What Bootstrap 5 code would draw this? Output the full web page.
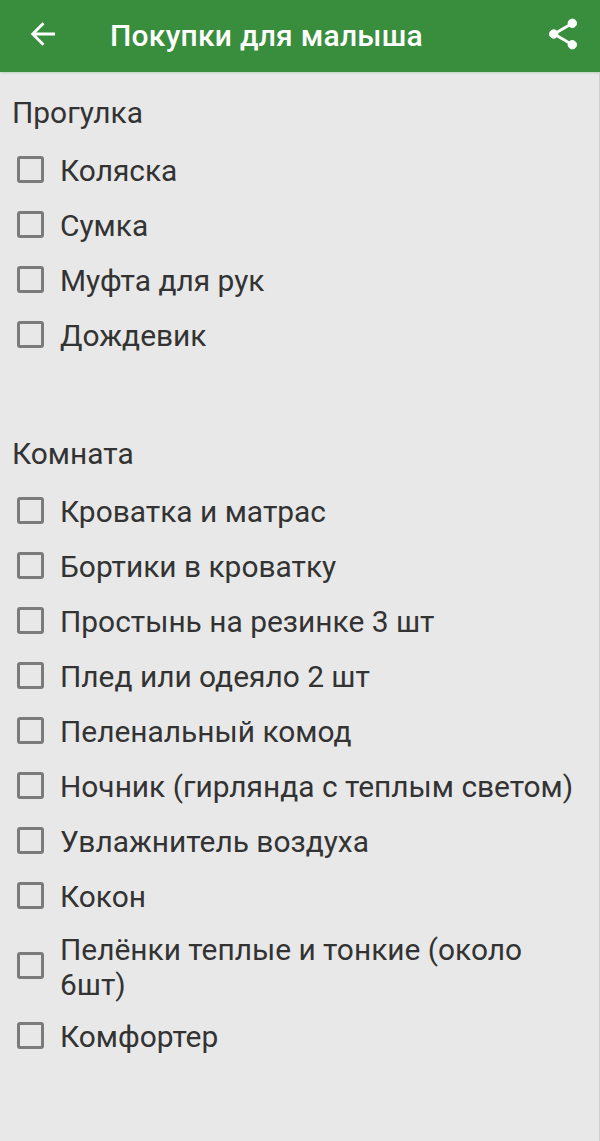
<!DOCTYPE html>
<html lang="ru">

<head>
  <meta charset="UTF-8" />
  <meta name="viewport" content="width=device-width, initial-scale=1.0" />
  <title>Покупки для малыша</title>
  <link href="https://cdn.jsdelivr.net/npm/bootstrap@5.3.0/dist/css/bootstrap.min.css" rel="stylesheet">
  <style>
    body {
      background: #e8e8e8;
      color: #333;
      font-family: Roboto, sans-serif;
      font-size: 29.9px;
      line-height: 35px;
    }

    /* App bar */
    .app-bar {
      height: 72px;
      padding: 0 20px 4px 28px;
      background: #388e3c;
      box-shadow: 0 1px 2px #b9d0ba;
    }

    .app-title {
      margin: 3px 0 0 52px;
      font-size: 30px;
      font-weight: 500;
      letter-spacing: 0.25px;
      color: #fff;
    }

    .section-title {
      margin: 0;
      font-size: 29.9px;
      font-weight: 400;
      line-height: 35px;
    }

    /* Checklists */
    main {
      min-height: 1069px;
      padding: 23px 11px 0 12px;
      border-right: 1px solid #cfcfcf;
    }

    .check-list {
      margin: 12px 0 74px;
    }

    .check-row {
      min-height: 55px;
      padding-left: 5px;
      gap: 16px;
    }

    .check-row.two-lines {
      min-height: 85px;
    }

    .check-row span {
      padding-top: 2px;
    }

    .check-row .form-check-input {
      width: 27px;
      height: 27px;
      margin: 0;
      border: 3px solid #7b7b7b;
      border-radius: 3px;
      background: transparent;
    }
  </style>
</head>

<body>

  <header class="app-bar d-flex align-items-center">
    <a href="#" class="d-flex" aria-label="Назад">
      <svg width="30" height="30" viewBox="0 0 30 30" fill="none" stroke="#fff" stroke-width="2.8">
        <path d="M27 15H5M15.5 4.2L4.7 15l10.8 10.8" />
      </svg>
    </a>
    <h1 class="app-title">Покупки для малыша</h1>
    <a href="#" class="d-flex ms-auto" aria-label="Поделиться">
      <svg width="34" height="34" viewBox="0 0 34 34" fill="#fff" stroke="#fff">
        <path d="M26 6.5L8 17l18 10.5" fill="none" stroke-width="2.8" />
        <circle cx="26.3" cy="6.3" r="4.2" />
        <circle cx="7.7" cy="17" r="4.2" />
        <circle cx="26.3" cy="27.7" r="4.2" />
      </svg>
    </a>
  </header>

  <main>
    <h2 class="section-title">Прогулка</h2>
    <div class="check-list">
      <label class="check-row d-flex align-items-center"><input class="form-check-input flex-shrink-0" type="checkbox"><span>Коляска</span></label>
      <label class="check-row d-flex align-items-center"><input class="form-check-input flex-shrink-0" type="checkbox"><span>Сумка</span></label>
      <label class="check-row d-flex align-items-center"><input class="form-check-input flex-shrink-0" type="checkbox"><span>Муфта для рук</span></label>
      <label class="check-row d-flex align-items-center"><input class="form-check-input flex-shrink-0" type="checkbox"><span>Дождевик</span></label>
    </div>

    <h2 class="section-title">Комната</h2>
    <div class="check-list mb-0">
      <label class="check-row d-flex align-items-center"><input class="form-check-input flex-shrink-0" type="checkbox"><span>Кроватка и матрас</span></label>
      <label class="check-row d-flex align-items-center"><input class="form-check-input flex-shrink-0" type="checkbox"><span>Бортики в кроватку</span></label>
      <label class="check-row d-flex align-items-center"><input class="form-check-input flex-shrink-0" type="checkbox"><span>Простынь на резинке 3 шт</span></label>
      <label class="check-row d-flex align-items-center"><input class="form-check-input flex-shrink-0" type="checkbox"><span>Плед или одеяло 2 шт</span></label>
      <label class="check-row d-flex align-items-center"><input class="form-check-input flex-shrink-0" type="checkbox"><span>Пеленальный комод</span></label>
      <label class="check-row d-flex align-items-center"><input class="form-check-input flex-shrink-0" type="checkbox"><span>Ночник (гирлянда с теплым светом)</span></label>
      <label class="check-row d-flex align-items-center"><input class="form-check-input flex-shrink-0" type="checkbox"><span>Увлажнитель воздуха</span></label>
      <label class="check-row d-flex align-items-center"><input class="form-check-input flex-shrink-0" type="checkbox"><span>Кокон</span></label>
      <label class="check-row two-lines d-flex align-items-center"><input class="form-check-input flex-shrink-0" type="checkbox"><span>Пелёнки теплые и тонкие (около 6шт)</span></label>
      <label class="check-row d-flex align-items-center"><input class="form-check-input flex-shrink-0" type="checkbox"><span>Комфортер</span></label>
    </div>
  </main>

  <script src="https://cdn.jsdelivr.net/npm/bootstrap@5.3.0/dist/js/bootstrap.bundle.min.js"></script>
</body>

</html>
